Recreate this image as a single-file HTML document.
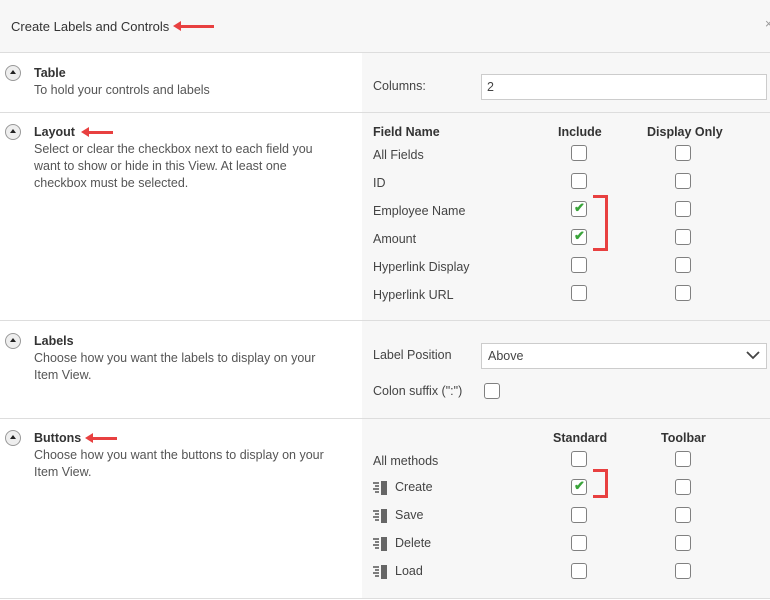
<!DOCTYPE html>
<html><head><style>
*{margin:0;padding:0;box-sizing:border-box}
body{width:770px;height:600px;position:relative;font-family:"Liberation Sans",sans-serif;font-size:12.5px;color:#444;background:#fff;overflow:hidden}
.a{position:absolute;white-space:nowrap}
.t{font-weight:bold;color:#333;font-size:12.5px}
.d{color:#555;line-height:17px;white-space:normal}
.cb{position:absolute;width:16px;height:16px;border:1.5px solid #808080;border-radius:3px;background:#fff}
.hl{position:absolute;left:0;width:770px;height:1px;background:#ddd}
.ic{position:absolute;width:16px;height:16px;border-radius:50%;border:1.5px solid #999;background:#eee}
.ic:after{content:"";position:absolute;left:3.5px;top:4px;border-left:3px solid transparent;border-right:3px solid transparent;border-bottom:4px solid #222}
.arr{position:absolute;height:3px;background:#e84040}
.arr:before{content:"";position:absolute;left:-7px;top:-4px;border-top:5.5px solid transparent;border-bottom:5.5px solid transparent;border-right:8px solid #e84040}
.br{position:absolute;border:3px solid #e84040;border-left:none}
.chk{color:#3aa43a;font-size:13px;font-weight:bold;position:absolute;left:2px;top:-2px}
.bi{position:absolute;width:17px;height:14px}
</style></head><body>
<div class="a" style="left:0;top:0;width:770px;height:52px;background:#f7f7f7"></div>
<div class="a" style="left:11px;top:19px;color:#333;font-size:13px">Create Labels and Controls</div>
<div class="arr" style="left:180px;top:25px;width:34px"></div>
<div class="a" style="left:765px;top:17px;color:#999">×</div>
<div class="hl" style="top:52px"></div>
<div class="a" style="left:362px;top:53px;width:408px;height:545px;background:#f7f7f7"></div>
<div class="hl" style="top:112px"></div>
<div class="hl" style="top:320px"></div>
<div class="hl" style="top:418px"></div>
<div class="hl" style="top:598px"></div>

<div class="ic" style="left:5px;top:65px"></div>
<div class="a t" style="left:34px;top:66px">Table</div>
<div class="a d" style="left:34px;top:82px">To hold your controls and labels</div>
<div class="a" style="left:373px;top:79px">Columns:</div>
<div class="a" style="left:481px;top:74px;width:286px;height:26px;background:#fff;border:1px solid #ccc;padding:5px 5px">2</div>

<div class="ic" style="left:5px;top:124px"></div>
<div class="a t" style="left:34px;top:125px">Layout</div>
<div class="arr" style="left:88px;top:131px;width:25px"></div>
<div class="a d" style="left:34px;top:141px;width:300px">Select or clear the checkbox next to each field you want to show or hide in this View. At least one checkbox must be selected.</div>
<div class="a t" style="left:373px;top:125px">Field Name</div>
<div class="a t" style="left:558px;top:125px">Include</div>
<div class="a t" style="left:647px;top:125px">Display Only</div>
<div class="a" style="left:373px;top:148px">All Fields</div>
<div class="a" style="left:373px;top:176px">ID</div>
<div class="a" style="left:373px;top:204px">Employee Name</div>
<div class="a" style="left:373px;top:232px">Amount</div>
<div class="a" style="left:373px;top:260px">Hyperlink Display</div>
<div class="a" style="left:373px;top:288px">Hyperlink URL</div>
<div class="cb" style="left:571px;top:145px"></div><div class="cb" style="left:675px;top:145px"></div>
<div class="cb" style="left:571px;top:173px"></div><div class="cb" style="left:675px;top:173px"></div>
<div class="cb" style="left:571px;top:201px"><span class="chk">✔</span></div><div class="cb" style="left:675px;top:201px"></div>
<div class="cb" style="left:571px;top:229px"><span class="chk">✔</span></div><div class="cb" style="left:675px;top:229px"></div>
<div class="cb" style="left:571px;top:257px"></div><div class="cb" style="left:675px;top:257px"></div>
<div class="cb" style="left:571px;top:285px"></div><div class="cb" style="left:675px;top:285px"></div>
<div class="br" style="left:593px;top:195px;width:15px;height:56px"></div>

<div class="ic" style="left:5px;top:333px"></div>
<div class="a t" style="left:34px;top:334px">Labels</div>
<div class="a d" style="left:34px;top:350px;width:300px">Choose how you want the labels to display on your Item View.</div>
<div class="a" style="left:373px;top:348px">Label Position</div>
<div class="a" style="left:481px;top:343px;width:286px;height:26px;background:#fff;border:1px solid #ccc;padding:5px 6px">Above</div>
<svg class="a" style="left:746px;top:350px" width="14" height="10"><path d="M1 2 L7 8 L13 2" stroke="#444" stroke-width="1.8" fill="none"/></svg>
<div class="a" style="left:373px;top:384px">Colon suffix (":")</div>
<div class="cb" style="left:484px;top:383px"></div>

<div class="ic" style="left:5px;top:430px"></div>
<div class="a t" style="left:34px;top:431px">Buttons</div>
<div class="arr" style="left:92px;top:437px;width:25px"></div>
<div class="a d" style="left:34px;top:447px;width:300px">Choose how you want the buttons to display on your Item View.</div>
<div class="a t" style="left:553px;top:431px">Standard</div>
<div class="a t" style="left:661px;top:431px">Toolbar</div>
<div class="a" style="left:373px;top:454px">All methods</div>
<div class="a" style="left:395px;top:480px">Create</div>
<div class="a" style="left:395px;top:508px">Save</div>
<div class="a" style="left:395px;top:536px">Delete</div>
<div class="a" style="left:395px;top:564px">Load</div>
<svg class="bi" style="left:373px;top:481px" viewBox="0 0 17 14"><path d="M0 2h6M2 5h4M0 8h6M2 11h4" stroke="#555" stroke-width="1.6"/><rect x="8" y="0" width="6" height="14" fill="#666"/></svg>
<svg class="bi" style="left:373px;top:509px" viewBox="0 0 17 14"><path d="M0 2h6M2 5h4M0 8h6M2 11h4" stroke="#555" stroke-width="1.6"/><rect x="8" y="0" width="6" height="14" fill="#666"/></svg>
<svg class="bi" style="left:373px;top:537px" viewBox="0 0 17 14"><path d="M0 2h6M2 5h4M0 8h6M2 11h4" stroke="#555" stroke-width="1.6"/><rect x="8" y="0" width="6" height="14" fill="#666"/></svg>
<svg class="bi" style="left:373px;top:565px" viewBox="0 0 17 14"><path d="M0 2h6M2 5h4M0 8h6M2 11h4" stroke="#555" stroke-width="1.6"/><rect x="8" y="0" width="6" height="14" fill="#666"/></svg>
<div class="cb" style="left:571px;top:451px"></div><div class="cb" style="left:675px;top:451px"></div>
<div class="cb" style="left:571px;top:479px"><span class="chk">✔</span></div><div class="cb" style="left:675px;top:479px"></div>
<div class="cb" style="left:571px;top:507px"></div><div class="cb" style="left:675px;top:507px"></div>
<div class="cb" style="left:571px;top:535px"></div><div class="cb" style="left:675px;top:535px"></div>
<div class="cb" style="left:571px;top:563px"></div><div class="cb" style="left:675px;top:563px"></div>
<div class="br" style="left:593px;top:469px;width:15px;height:29px"></div>
</body></html>
